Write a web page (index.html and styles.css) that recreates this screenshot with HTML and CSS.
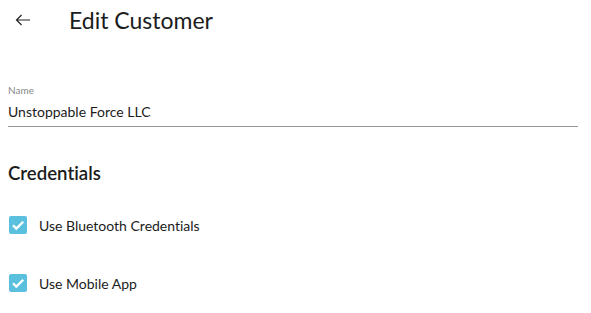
FILE: index.html
```html
<!DOCTYPE html>
<html>
<head>
<meta charset="utf-8">
<link rel="stylesheet" href="styles.css">
</head>
<body>
<header class="topbar">
  <button class="back" aria-label="Back">
    <svg width="16" height="12" viewBox="0 0 16 12"><path d="M15 6H1.5M6.5 1L1.5 6l5 5" fill="none" stroke="#222" stroke-width="1.2"/></svg>
  </button>
  <h1 class="title">Edit Customer</h1>
</header>
<main class="content">
  <div class="field">
    <label class="field-label">Name</label>
    <div class="field-value">Unstoppable Force LLC</div>
  </div>
  <h2 class="section-title">Credentials</h2>
  <label class="check-row">
    <span class="checkbox"><svg width="18" height="18" viewBox="0 0 18 18"><path d="M4 9.3l3.3 3.3L14.2 5.7" fill="none" stroke="#fff" stroke-width="2.3"/></svg></span>
    <span class="check-label">Use Bluetooth Credentials</span>
  </label>
  <label class="check-row">
    <span class="checkbox"><svg width="18" height="18" viewBox="0 0 18 18"><path d="M4 9.3l3.3 3.3L14.2 5.7" fill="none" stroke="#fff" stroke-width="2.3"/></svg></span>
    <span class="check-label">Use Mobile App</span>
  </label>
</main>
</body>
</html>
```
FILE: styles.css
```css
html, body { margin: 0; padding: 0; background: #fff; }
body { font-family: Lato, "Open Sans", sans-serif; color: #1c1c1c; font-variant-ligatures: none; font-feature-settings: "liga" 0, "clig" 0; }
.topbar { display: flex; align-items: center; height: 40px; }
.back { border: 0; background: none; padding: 0; margin-left: 15px; width: 16px; height: 12px; display: flex; }
.title { margin: 0 0 0 38px; font-size: 23px; font-weight: 400; line-height: 40px; }
.content { padding: 0 13px 0 8px; }
.field { margin-top: 44px; border-bottom: 1px solid #949494; padding-bottom: 5px; }
.field-label { display: block; font-size: 10px; color: #888; line-height: 12px; }
.field-value { font-size: 14px; line-height: 18px; margin-top: 7px; }
.section-title { margin: 34px 0 0 0; font-size: 18.6px; font-weight: 600; line-height: 24px; }
.check-row { display: flex; align-items: center; margin-top: 31px; height: 18px; margin-left: 1px; }
.check-row + .check-row { margin-top: 40px; }
.checkbox { width: 18px; height: 18px; border-radius: 2px; background: #5bc0de; display: flex; }
.check-label { margin-left: 12px; font-size: 14px; }
```
